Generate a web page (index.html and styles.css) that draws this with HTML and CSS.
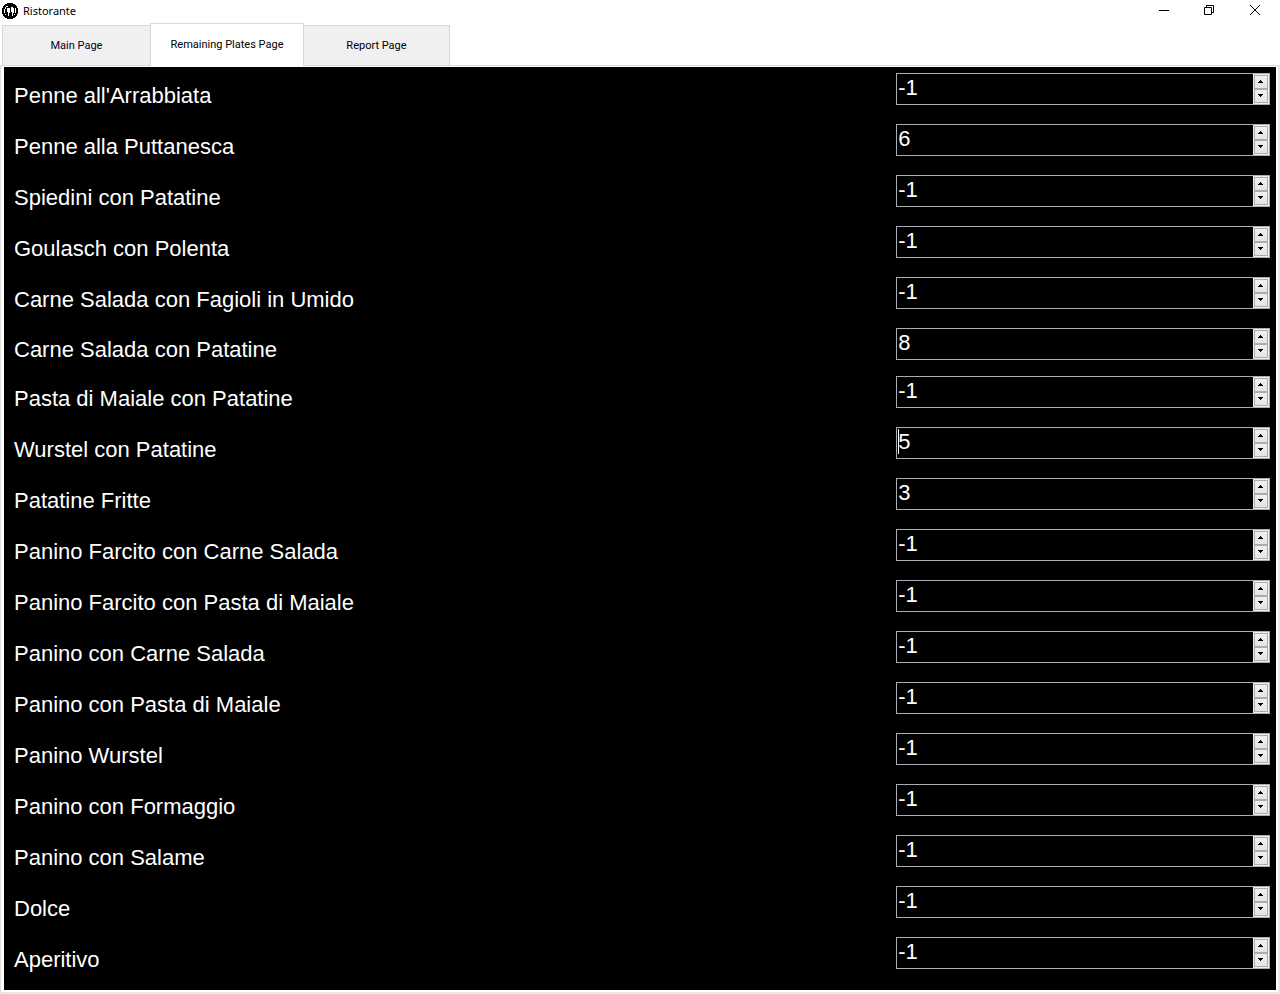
FILE: index.html
```html
<!DOCTYPE html>
<html lang="it">
<head>
<meta charset="utf-8">
<title>Ristorante</title>
<link rel="stylesheet" href="styles.css">
</head>
<body>
<header class="titlebar">
  <svg class="logo" viewBox="0 0 16 16" shape-rendering="crispEdges" aria-hidden="true">
    <path d="M5 0h6v1h2v1h1v1h1v2h1v6h-1v2h-1v1h-1v1h-2v1H5v-1H3v-1H2v-1H1v-2H0V5h1V3h1V2h1V1h2z" fill="#000"/>
    <path d="M4 3h2v1H4zM3 4h1v2H3zM2 6h1v4H2zM5 5h3v5H7v3H6V9H5zM9 4h2v1h1v5h-1v3h-1V9H9zM13 5h1v5h-1zM3 11h1v1H3zM12 11h1v1h-1z" fill="#fff"/>
  </svg>
  <h1 class="title">Ristorante</h1>
  <div class="window-buttons">
    <button class="window-button" aria-label="Minimize"><svg viewBox="0 0 10 10"><path d="M1 5.500h10"/></svg></button>
    <button class="window-button" aria-label="Restore"><svg viewBox="0 0 10 10"><path d="M.5 2.500h7v7h-7zM2.500 2.500v-2h7v7h-2"/></svg></button>
    <button class="window-button" aria-label="Close"><svg viewBox="0 0 10 10"><path d="M0 0l10 10M10 0L0 10"/></svg></button>
  </div>
</header>
<nav class="tabs" role="tablist">
  <button class="tab" role="tab">Main Page</button>
  <button class="tab tab-active" role="tab" aria-selected="true">Remaining Plates Page</button>
  <button class="tab" role="tab">Report Page</button>
</nav>
<main class="page">
  <form class="plates" id="plates"></form>
</main>
<script src="app.js"></script>
</body>
</html>
```

FILE: styles.css
```css
* {
  box-sizing: border-box;
}

body {
  margin: 0;
  min-height: 100vh;
  display: flex;
  flex-direction: column;
  background: #fff;
  font-family: "Liberation Sans", Arial, sans-serif;
}

button {
  font: inherit;
  padding: 0;
  border: 0;
  border-radius: 0;
  color: inherit;
  background: none;
}

.titlebar {
  display: flex;
  align-items: center;
  height: 22px;
  padding-left: 2px;
}

.logo {
  width: 16px;
  height: 16px;
}

.title {
  flex: 1;
  margin: 0 0 0 5px;
  font: 11px/16px "Noto Sans", sans-serif;
  color: #000;
}

.window-buttons {
  display: flex;
  align-items: center;
  padding-right: 2px;
}

.window-button {
  display: grid;
  place-items: center;
  width: 46px;
  height: 20px;
  padding-bottom: 2px;
}

.window-button svg {
  width: 10px;
  height: 10px;
  overflow: visible;
  fill: none;
  stroke: #000;
  stroke-width: 1;
}

.tabs {
  display: flex;
  align-items: flex-end;
  padding-left: 2px;
  height: 43px;
}

.tab {
  width: 148px;
  height: 40px;
  border: 1px solid #d9d9d9;
  border-width: 1px 1px 0;
  background: #f0f0f0;
  color: #000;
  font-family: Roboto, sans-serif;
  font-size: 11px;
}

.tab:first-child {
  border-right: 0;
  color: #000030;
}

.tab:last-child {
  width: 146px;
  border-left: 0;
}

.tab-active {
  position: relative;
  width: 154px;
  height: 43px;
  margin-bottom: -1px;
  padding-bottom: 2px;
  background: #fff;
}

.page {
  flex: 1;
  display: flex;
  border: 1px solid #dcdcdc;
  border-right: 2px solid #e8e8e8;
  border-bottom: 2px solid #e8e8e8;
  padding: 1px 2px 2px 3px;
}

.plates {
  flex: 1;
  padding: 3px;
  background: #000;
  color: #fff;
  font-size: 22px;
}

.row {
  display: grid;
  grid-template-columns: 70fr 30fr;
  align-items: start;
  height: 51px;
  padding-top: 3px;
}

.row-short {
  height: 48px;
}

.name {
  padding: 7px 0 0 7px;
  line-height: 32px;
}

.row-short .name {
  padding-top: 6px;
}

.spinner {
  position: relative;
  display: flex;
  height: 32px;
  margin: 0 3px;
  border: 1px solid #abadb3;
}

.value {
  flex: 1;
  min-width: 0;
  padding: 0 1px 2px;
  border: 0;
  outline: 0;
  background: #000;
  color: #fff;
  font: inherit;
  appearance: textfield;
}

.value::-webkit-inner-spin-button {
  appearance: none;
  margin: 0;
}

.caret {
  position: absolute;
  left: 1px;
  top: 1px;
  width: 1px;
  height: 25px;
  background: #fff;
}

.arrows {
  display: flex;
  flex-direction: column;
  width: 16px;
  padding: 1px;
  background: #f0f0f0;
}

.arrow {
  flex: 1;
  display: grid;
  place-items: center;
  padding: 0 1px 1px 0;
  border: 1px solid #acacac;
  background: linear-gradient(#f0f0f0, #e5e5e5);
}

.arrow svg {
  width: 5px;
  height: 3px;
  fill: #000;
}
```

FILE: app.js
```js
const plates = [
  ["Penne all'Arrabbiata", -1],
  ["Penne alla Puttanesca", 6],
  ["Spiedini con Patatine", -1],
  ["Goulasch con Polenta", -1],
  ["Carne Salada con Fagioli in Umido", -1],
  ["Carne Salada con Patatine", 8],
  ["Pasta di Maiale con Patatine", -1],
  ["Wurstel con Patatine", 5],
  ["Patatine Fritte", 3],
  ["Panino Farcito con Carne Salada", -1],
  ["Panino Farcito con Pasta di Maiale", -1],
  ["Panino con Carne Salada", -1],
  ["Panino con Pasta di Maiale", -1],
  ["Panino Wurstel", -1],
  ["Panino con Formaggio", -1],
  ["Panino con Salame", -1],
  ["Dolce", -1],
  ["Aperitivo", -1]
];
const editing = 7;
const shortRow = 5;

document.getElementById("plates").innerHTML = plates.map(([name, count], i) => `
  <div class="row${i === shortRow ? " row-short" : ""}">
    <label class="name" for="plate-${i}">${name}</label>
    <div class="spinner">
      <input class="value" type="number" id="plate-${i}" value="${count}">
      ${i === editing ? '<span class="caret"></span>' : ""}
      <div class="arrows">
        <button type="button" class="arrow" aria-label="Increase"><svg viewBox="0 0 5 3"><path d="M2 0h1v1h1v1h1v1H0V2h1V1h1z"/></svg></button>
        <button type="button" class="arrow" aria-label="Decrease"><svg viewBox="0 0 5 3"><path d="M0 0h5v1H4v1H3v1H2V2H1V1H0z"/></svg></button>
      </div>
    </div>
  </div>`).join("");
```
